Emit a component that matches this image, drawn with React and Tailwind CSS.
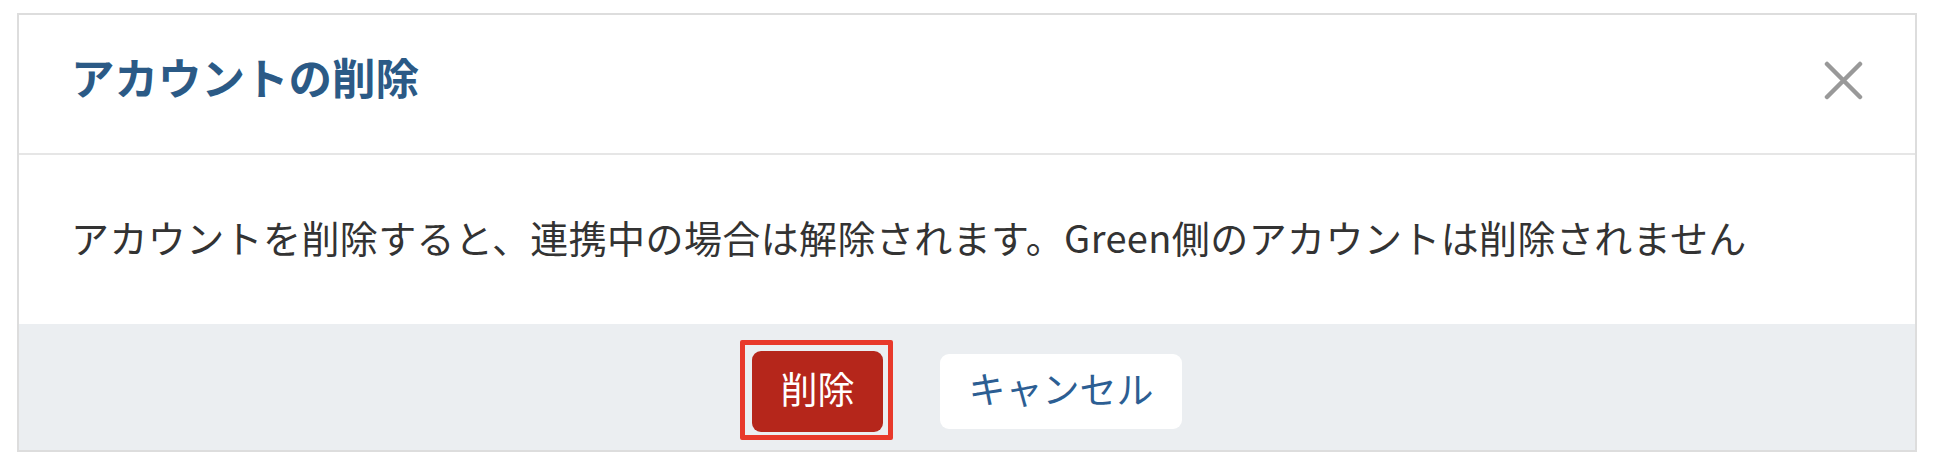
export default function App() {
  return (
    <div
      className="w-[1936px] h-[470px] bg-white pt-[13px] pl-[17px]"
      style={{ fontFamily: '"Noto Sans CJK JP", "Noto Sans", sans-serif' }}
    >
      <div className="w-[1900px] border-2 border-[#dddddd] bg-white flex flex-col">
        {/* Header */}
        <div className="h-[140px] flex items-start justify-between pl-[52px] pr-[52px] border-b-2 border-[#e6e6e6]">
          <h2 className="mt-[40px] text-[43.5px] leading-[44px] font-bold text-[#2b5a86]">
            アカウントの削除
          </h2>
          <button className="mt-[46px] w-[39px] h-[39px] flex items-center justify-center">
            <svg width="39" height="39" viewBox="0 0 39 39" fill="none">
              <path d="M3 3 L36 36 M36 3 L3 36" stroke="#999999" strokeWidth="4.5" strokeLinecap="round" />
            </svg>
          </button>
        </div>

        {/* Body */}
        <div className="h-[169px] flex items-center pl-[52px] pb-[5px]">
          <p className="text-[38px] leading-[38px] tracking-[0.4px] text-[#333333] whitespace-nowrap">
            アカウントを削除すると、連携中の場合は解除されます。Green側のアカウントは削除されません
          </p>
        </div>

        {/* Footer */}
        <div className="h-[126px] bg-[#ebeef1] flex items-center justify-center gap-[57px] pt-[9px]">
          <div className="relative">
            <button className="h-[81px] px-[28.5px] rounded-[9px] bg-[#b5261b] text-white text-[37px] leading-none flex items-center justify-center pb-[6px]">
              削除
            </button>
            <div className="absolute -left-[12px] -top-[11px] w-[153px] h-[100px] border-[5px] border-[#e8392b] rounded-[2px] pointer-events-none" />
          </div>
          <button className="h-[75px] px-[28.5px] rounded-[9px] bg-white text-[#2c5e93] text-[37px] leading-none flex items-center justify-center pb-[6px]">
            キャンセル
          </button>
        </div>
      </div>
    </div>
  );
}
